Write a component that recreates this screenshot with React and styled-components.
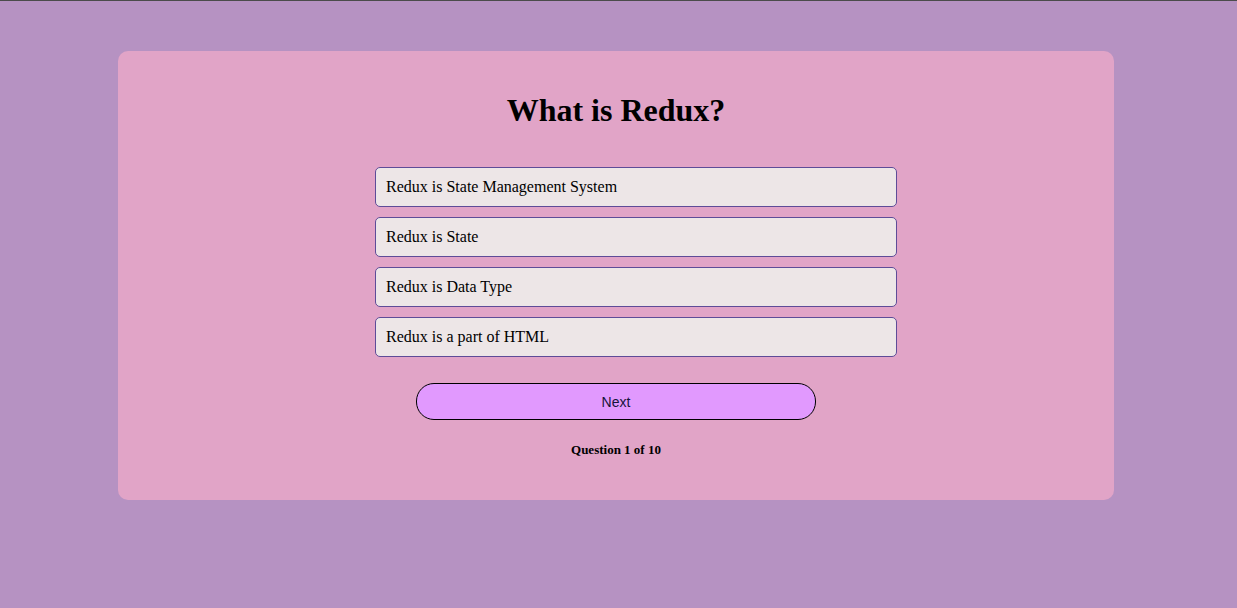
import React from 'react';
import styled, { createGlobalStyle } from "styled-components";

const GlobalStyle = createGlobalStyle`
    html, body {
        margin: 0;
        padding: 0;
        background-color: #b692c2;
    }
    body {
        font-family: "Liberation Serif", "Times New Roman", serif;
        min-height: 608px;
        border-top: 1px solid #4b4b4b;
        box-sizing: border-box;
    }
`

const answers = [
    'Redux is State Management System',
    'Redux is State',
    'Redux is Data Type',
    'Redux is a part of HTML',
]

const App = () => {
    return (
        <>
            <GlobalStyle />
            <Page>
                <Card>
                    <Title>What is Redux?</Title>
                    <Options>
                        {answers.map((a) => (
                            <Option key={a}>{a}</Option>
                        ))}
                    </Options>
                    <NextButton>Next</NextButton>
                    <Counter>Question 1 of 10</Counter>
                </Card>
            </Page>
        </>
    )
}

// styled-components
const Page = styled.div`
    padding-top: 50px;
    padding-left: 118px;
`

const Card = styled.div`
    width: 996px;
    height: 449px;
    box-sizing: border-box;
    background-color: #e1a4c7;
    border-radius: 10px;
    display: flex;
    flex-direction: column;
    align-items: center;
    padding-top: 41px;
`

const Title = styled.h1`
    margin: 0;
    font-size: 32px;
    line-height: 37px;
    font-weight: bold;
    color: #000;
`

const Options = styled.div`
    display: flex;
    flex-direction: column;
    gap: 10px;
    width: 522px;
    margin-top: 38px;
    margin-left: 40px;
`

const Option = styled.div`
    height: 40px;
    box-sizing: border-box;
    display: flex;
    align-items: center;
    padding-left: 10px;
    background-color: #ede6e7;
    border: 1px solid #5e4c98;
    border-radius: 5px;
    font-size: 16px;
    color: #000;
    cursor: pointer;
`

const NextButton = styled.button`
    margin-top: 26px;
    width: 400px;
    height: 37px;
    box-sizing: border-box;
    background-color: #e199fe;
    border: 1px solid #000;
    border-radius: 18px;
    font-family: "Liberation Sans", Arial, sans-serif;
    font-size: 14px;
    color: #15153a;
    cursor: pointer;
`

const Counter = styled.p`
    margin: 22px 0 0;
    font-size: 13px;
    line-height: 15px;
    font-weight: bold;
    color: #000;
`

export default App;
